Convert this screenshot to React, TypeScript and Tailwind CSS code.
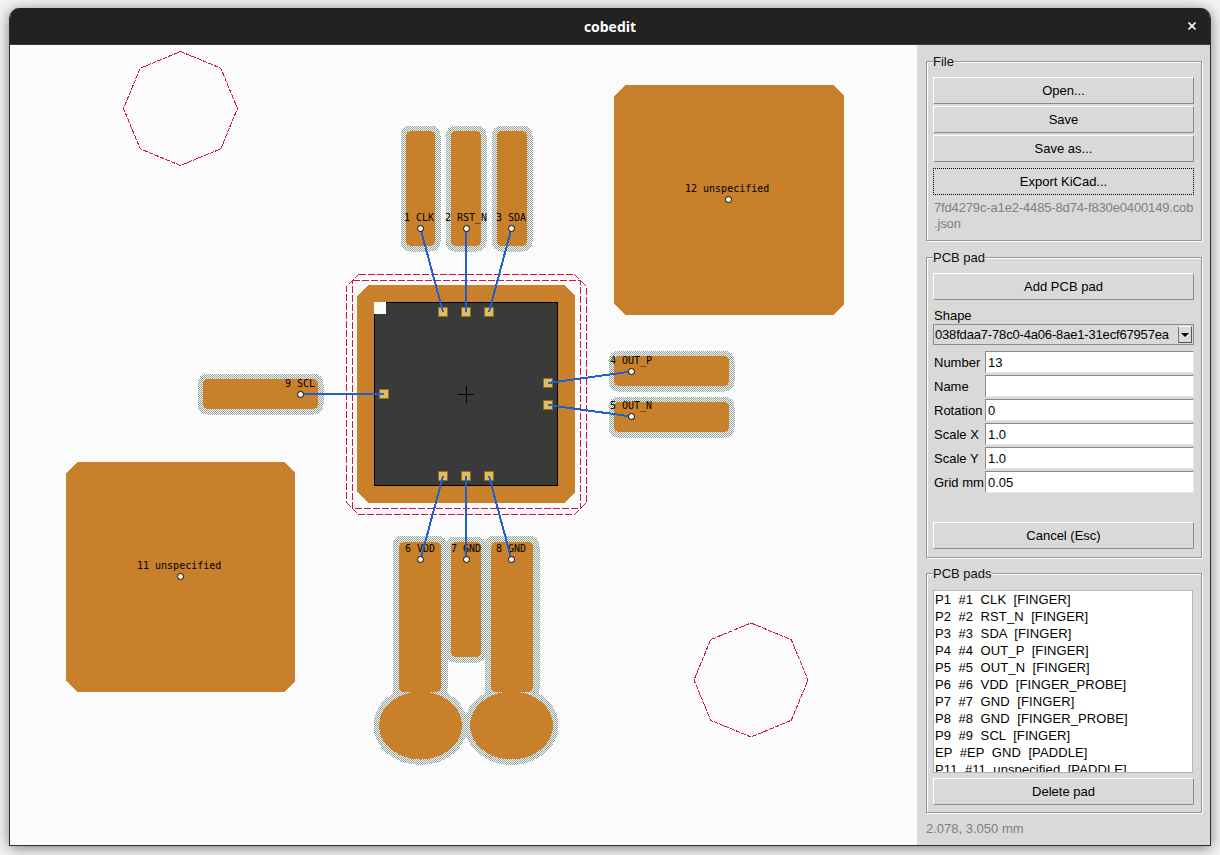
import { X } from 'lucide-react'

const COPPER = '#c8802b'
const RED = '#c8174a'
const WIRE = '#1f5fd0'

interface Finger {
  x: number
  y: number
  w: number
  h: number
  grow: number
}

interface Pad {
  label: string
  labelX: number
  labelY: number
  ax: number
  ay: number
  px: number
  py: number
}

const FINGERS: Finger[] = [
  { x: 406, y: 131, w: 29, h: 115, grow: 5.5 },
  { x: 451, y: 131, w: 30, h: 115, grow: 5.5 },
  { x: 497, y: 131, w: 30, h: 115, grow: 5.5 },
  { x: 614, y: 356, w: 115, h: 30, grow: 5.5 },
  { x: 614, y: 402, w: 115, h: 30, grow: 5.5 },
  { x: 399, y: 542, w: 42, h: 150, grow: 6.5 },
  { x: 451, y: 542, w: 30, h: 115, grow: 5.5 },
  { x: 491, y: 542, w: 42, h: 150, grow: 6.5 },
  { x: 203, y: 379, w: 115, h: 30, grow: 5.5 },
]

const PADS: Pad[] = [
  { label: '1 CLK', labelX: 404, labelY: 221, ax: 420.5, ay: 228.5, px: 443, py: 312 },
  { label: '2 RST_N', labelX: 445, labelY: 221, ax: 466.5, ay: 228.5, px: 466, py: 312 },
  { label: '3 SDA', labelX: 496, labelY: 221, ax: 511.5, ay: 228.5, px: 489, py: 312 },
  { label: '4 OUT_P', labelX: 610, labelY: 364, ax: 631.5, ay: 371.5, px: 548, py: 383 },
  { label: '5 OUT_N', labelX: 610, labelY: 409, ax: 631.5, ay: 416.5, px: 548, py: 405 },
  { label: '6 VDD', labelX: 405, labelY: 552, ax: 420.5, ay: 559.5, px: 443, py: 476 },
  { label: '7 GND', labelX: 451, labelY: 552, ax: 466.5, ay: 559.5, px: 466, py: 476 },
  { label: '8 GND', labelX: 496, labelY: 552, ax: 511.5, ay: 559.5, px: 489, py: 476 },
  { label: '9 SCL', labelX: 285, labelY: 387, ax: 300.5, ay: 394.5, px: 384, py: 394 },
]

const PAD_LIST = [
  'P1  #1  CLK  [FINGER]',
  'P2  #2  RST_N  [FINGER]',
  'P3  #3  SDA  [FINGER]',
  'P4  #4  OUT_P  [FINGER]',
  'P5  #5  OUT_N  [FINGER]',
  'P6  #6  VDD  [FINGER_PROBE]',
  'P7  #7  GND  [FINGER]',
  'P8  #8  GND  [FINGER_PROBE]',
  'P9  #9  SCL  [FINGER]',
  'EP  #EP  GND  [PADDLE]',
  'P11  #11  unspecified  [PADDLE]',
]

const FIELDS = [
  ['Number', '13'],
  ['Name', ''],
  ['Rotation', '0'],
  ['Scale X', '1.0'],
  ['Scale Y', '1.0'],
  ['Grid mm', '0.05'],
]

function chamfer(x1: number, y1: number, x2: number, y2: number, c: number) {
  return `${x1 + c},${y1} ${x2 - c},${y1} ${x2},${y1 + c} ${x2},${y2 - c} ${x2 - c},${y2} ${x1 + c},${y2} ${x1},${y2 - c} ${x1},${y1 + c}`
}

function octagon(cx: number, cy: number, r: number) {
  const d = r * 0.7071
  return `${cx},${cy - r} ${cx + d},${cy - d} ${cx + r},${cy} ${cx + d},${cy + d} ${cx},${cy + r} ${cx - d},${cy + d} ${cx - r},${cy} ${cx - d},${cy - d}`
}

function PcbCanvas() {
  return (
    <svg viewBox="10 45 907 800" className="w-[907px] h-[800px] shrink-0 bg-[#fbfbfb]" shapeRendering="crispEdges">
      <defs>
        <pattern id="halo" x="0" y="0" width="2" height="2" patternUnits="userSpaceOnUse">
          <rect x="0" y="0" width="2" height="2" fill="#fbfbfb" />
          <rect x="0" y="0" width="1" height="1" fill="#8fa098" />
          <rect x="1" y="1" width="1" height="1" fill="#8fa098" />
        </pattern>
      </defs>

      {/* keepout octagons */}
      <polygon points={octagon(180.5, 108.5, 57)} fill="none" stroke={RED} strokeDasharray="5 1" />
      <polygon points={octagon(751, 680, 57)} fill="none" stroke={RED} strokeDasharray="5 1" />

      {/* clearance */}
      {FINGERS.map((f, i) => (
        <rect
          key={i}
          x={f.x - f.grow}
          y={f.y - f.grow}
          width={f.w + f.grow * 2}
          height={f.h + f.grow * 2}
          rx={10}
          fill="url(#halo)"
        />
      ))}
      <ellipse cx={420.5} cy={725.5} rx={47} ry={39.5} fill="url(#halo)" />
      <ellipse cx={511.5} cy={725.5} rx={47} ry={39.5} fill="url(#halo)" />

      {/* copper */}
      {FINGERS.map((f, i) => (
        <rect key={i} x={f.x} y={f.y} width={f.w} height={f.h} rx={5} fill={COPPER} />
      ))}
      <ellipse cx={420.5} cy={725.5} rx={41.5} ry={34} fill={COPPER} />
      <ellipse cx={511.5} cy={725.5} rx={41.5} ry={34} fill={COPPER} />
      <polygon points={chamfer(614, 85, 844, 315, 11)} fill={COPPER} />
      <polygon points={chamfer(66, 462, 295, 692, 11)} fill={COPPER} />

      {/* chip outline */}
      <polygon points={chamfer(346.5, 274.5, 586.5, 514.5, 12)} fill="none" stroke={RED} strokeDasharray="7 2" />
      <rect x={352.5} y={280.5} width={228} height={228} fill="none" stroke={RED} strokeDasharray="7 2" />
      <polygon points={chamfer(357, 285, 575, 503, 11)} fill={COPPER} />
      <rect x={374.5} y={302.5} width={183} height={183} fill="#3a3a3a" stroke="#000" />
      <rect x={374} y={302} width={12} height={12} fill="#fbfbfb" />
      <path d="M458 394.5H474M466.5 386V403" stroke="#000" fill="none" />

      {PADS.map((p) => (
        <rect key={p.label} x={p.px - 5} y={p.py - 5} width={10} height={10} fill="#8a7020" />
      ))}
      {PADS.map((p) => (
        <rect key={p.label} x={p.px - 4} y={p.py - 4} width={8} height={8} fill="#e3bb5a" />
      ))}

      {/* labels */}
      {PADS.map((p) => (
        <text key={p.label} x={p.labelX} y={p.labelY} fontFamily="'DejaVu Sans Mono', monospace" fontSize={10} fill="#000">
          {p.label}
        </text>
      ))}
      <text x={685} y={192} fontFamily="'DejaVu Sans Mono', monospace" fontSize={10} fill="#000">12 unspecified</text>
      <text x={137} y={569} fontFamily="'DejaVu Sans Mono', monospace" fontSize={10} fill="#000">11 unspecified</text>

      {/* ratsnest */}
      {PADS.map((p) => (
        <line key={p.label} x1={p.ax} y1={p.ay} x2={p.px} y2={p.py} stroke={WIRE} strokeWidth={2} />
      ))}

      {/* anchors */}
      {PADS.map((p) => (
        <circle key={p.label} cx={p.ax} cy={p.ay} r={3} fill="#fff" stroke="#000" shapeRendering="auto" />
      ))}
      <circle cx={728.5} cy={199.5} r={3} fill="#fff" stroke="#000" shapeRendering="auto" />
      <circle cx={180.5} cy={576.5} r={3} fill="#fff" stroke="#000" shapeRendering="auto" />
    </svg>
  )
}

function TkButton({ label, focused, className }: { label: string; focused?: boolean; className?: string }) {
  return (
    <button
      className={`w-[261px] h-[27px] flex items-center justify-center text-black bg-[#d9d9d9] border ${
        focused
          ? 'border-dotted border-black'
          : 'border-t-white border-l-white border-b-[#8c8c8c] border-r-[#8c8c8c]'
      } ${className ?? ''}`}
    >
      {label}
    </button>
  )
}

function Group({ title, className, children }: { title: string; className: string; children: React.ReactNode }) {
  return (
    <fieldset
      className={`w-[276px] border border-[#939393] shadow-[inset_1px_1px_0_#fff,1px_1px_0_#fff] px-[6px] ${className}`}
    >
      <legend className="h-[15px] leading-[15px] bg-[#d9d9d9] text-[#111]">{title}</legend>
      {children}
    </fieldset>
  )
}

export default function App() {
  return (
    <div className="w-[1220px] h-[855px] overflow-hidden bg-[#f4f4f4] pl-[9px] pt-[8px] font-['Liberation_Sans',Arial,sans-serif] text-[13px]">
      <div className="w-[1202px] h-[838px] flex flex-col rounded-t-[10px] border-x border-b border-[#2e2e2e] shadow-[0_2px_14px_rgba(0,0,0,0.5)] overflow-hidden">
        {/* Title bar */}
        <div className="h-[37px] shrink-0 relative flex items-center justify-center bg-[#222222] border-b border-[#3c3c3c]">
          <span className="text-white font-bold text-[14px] font-['Open_Sans',sans-serif]">cobedit</span>
          <X className="absolute right-[12px] top-[12px] w-[12px] h-[12px] text-white" strokeWidth={3.5} />
        </div>

        <div className="flex flex-1 min-h-0">
          <PcbCanvas />

          {/* Side panel */}
          <div className="flex-1 bg-[#d9d9d9] pl-[9px] flex flex-col">
            <Group title="File" className="h-[187px] mt-[9px]">
              <div className="flex flex-col gap-[2px] pt-[8px]">
                <TkButton label="Open..." />
                <TkButton label="Save" />
                <TkButton label="Save as..." />
                <TkButton label="Export KiCad..." focused className="mt-[4px]" />
              </div>
              <p className="mt-[5px] pl-[1px] text-[#808080] leading-[16px] tracking-[-0.15px] whitespace-nowrap">
                7fd4279c-a1e2-4485-8d74-f830e0400149.cob
                <br />
                .json
              </p>
            </Group>

            <Group title="PCB pad" className="h-[308px] mt-[9px]">
              <TkButton label="Add PCB pad" className="mt-[8px]" />
              <div className="h-[16px] mt-[8px] leading-[16px] pl-[1px]">Shape</div>
              <div className="w-[261px] h-[21px] border border-[#8c8c8c] flex items-center justify-between overflow-hidden">
                <span className="pl-[1px] tracking-[-0.17px] whitespace-nowrap">038fdaa7-78c0-4a06-8ae1-31ecf67957ea</span>
                <span className="w-[14px] h-[17px] shrink-0 mr-[1px] border border-[#555] border-t-white border-l-[#777] flex items-center justify-center">
                  <svg viewBox="0 0 8 4" className="w-[8px] h-[4px]">
                    <polygon points="0,0 8,0 4,4" fill="#000" />
                  </svg>
                </span>
              </div>
              <div className="flex flex-col gap-[2px] mt-[6px]">
                {FIELDS.map(([name, value]) => (
                  <div key={name} className="flex items-center h-[22px]">
                    <span className="w-[52px] pl-[1px] pt-[1px] whitespace-nowrap">{name}</span>
                    <input
                      readOnly
                      value={value}
                      className="w-[209px] h-[22px] bg-white border border-t-[#8c8c8c] border-l-[#8c8c8c] border-b-[#e8e8e8] border-r-[#e8e8e8] px-[2px] text-black outline-none"
                    />
                  </div>
                ))}
              </div>
              <TkButton label="Cancel (Esc)" className="mt-[29px]" />
            </Group>

            <Group title="PCB pads" className="h-[247px] mt-[8px]">
              <div className="w-[260px] h-[183px] mt-[9px] bg-white border border-[#b5b5b5] overflow-hidden">
                {PAD_LIST.map((row) => (
                  <div key={row} className="h-[17px] leading-[17px] pl-[1px] whitespace-pre text-black tracking-[0.1px]">
                    {row}
                  </div>
                ))}
              </div>
              <TkButton label="Delete pad" className="mt-[5px]" />
            </Group>

            <div className="mt-[6px] text-[#808080]">2.078, 3.050 mm</div>
          </div>
        </div>
      </div>
    </div>
  )
}
